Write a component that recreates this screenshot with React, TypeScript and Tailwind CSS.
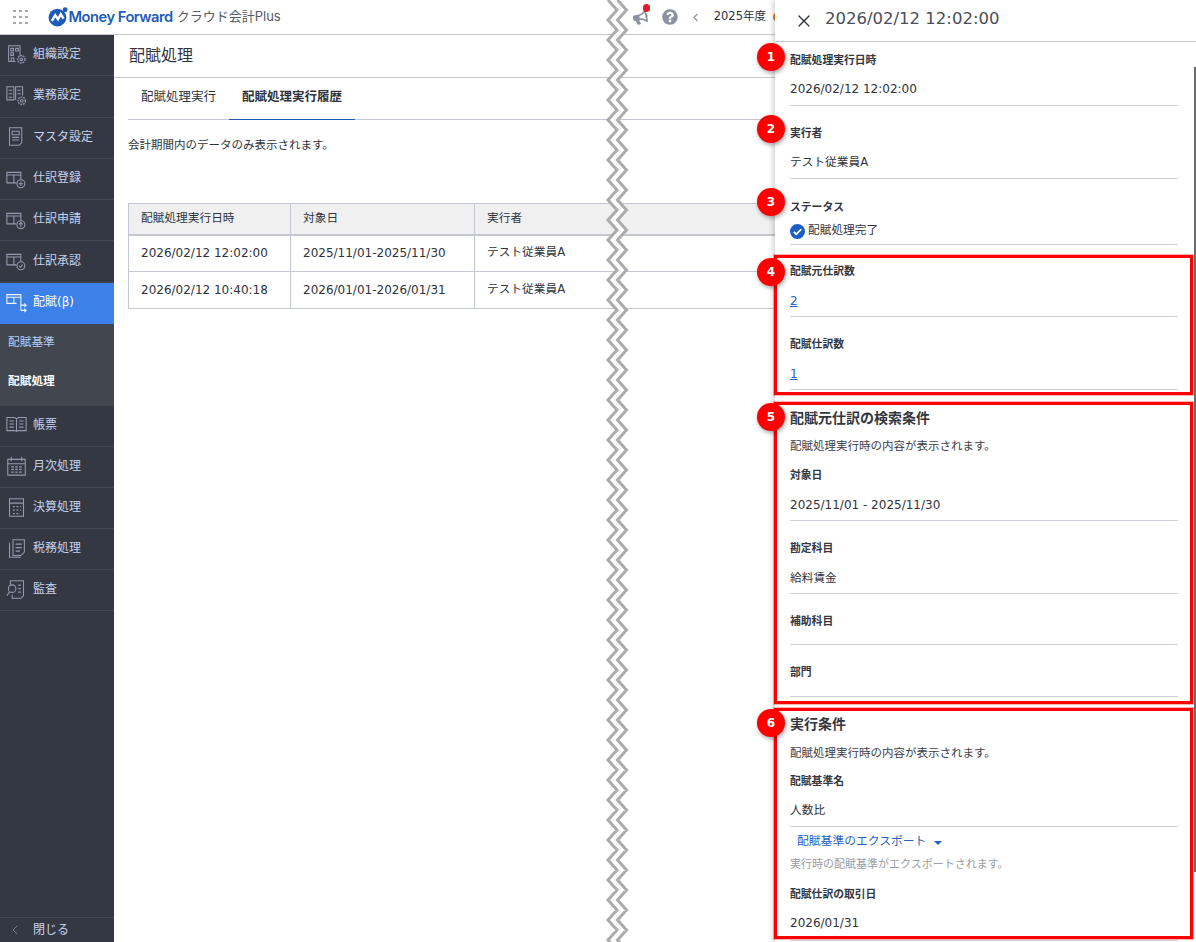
import { ReactNode } from 'react'
import { FaBullhorn, FaQuestionCircle } from 'react-icons/fa'
import { ChevronLeft, X } from 'lucide-react'

const font = { fontFamily: '"DejaVu Sans", "Noto Sans CJK JP", sans-serif' }
const logoFont = { fontFamily: 'Inter, "Noto Sans CJK JP", sans-serif' }

const Ico = ({ children }: { children: ReactNode }) => (
    <svg width="21" height="21" viewBox="0 0 24 24" fill="none" stroke="#949bb0" strokeWidth="1.2" className="shrink-0">
        {children}
    </svg>
)

const Gear = ({ x, y }: { x: number; y: number }) => (
    <g>
        <circle cx={x} cy={y} r="4.2" fill="#343842" strokeDasharray="2 1" strokeWidth="1.6" />
        <circle cx={x} cy={y} r="1.5" />
    </g>
)

const Ledger = ({ children }: { children?: ReactNode }) => (
    <>
        <path d="M17 13V5H1v12h11" />
        <path d="M1 8h16M9 8v9" />
        {children}
    </>
)

const icons: Record<string, ReactNode> = {
    org: (
        <>
            <path d="M3 20V2h13v12M3 20h8" />
            <path d="M5.5 5h3v3h-3zM11 5h3v3h-3zM5.5 10h3v3h-3zM6 20v-4h3v4" />
            <Gear x={17.5} y={17.5} />
        </>
    ),
    work: (
        <>
            <path d="M1 2h8v15H1zM11 17V2h8v10" />
            <path d="M3 6h4M3 10h4M3 14h4M13 6h4M13 10h4" />
            <Gear x={18} y={18} />
        </>
    ),
    master: (
        <>
            <path d="M4 2h14v17l-3 3H4z" />
            <path d="M7 6h8v4H7zM7 13h8M7 16h8" />
        </>
    ),
    entry: (
        <Ledger>
            <circle cx="17" cy="18" r="4.5" />
            <path d="M17 15.5v5M14.5 18h5" />
        </Ledger>
    ),
    request: (
        <Ledger>
            <circle cx="17" cy="18" r="4.5" />
            <path d="M17 21v-5.5M15 17.5l2-2 2 2" />
        </Ledger>
    ),
    approve: (
        <Ledger>
            <circle cx="17" cy="18" r="4.5" />
            <path d="M15 18l1.6 1.6 2.6-3" />
        </Ledger>
    ),
    allocate: (
        <>
            <path d="M17 10V3H1v10h11M1 6h16M9 6v7" />
            <path d="M17 10v11M17 15h6M17 21h6M21 13l2 2-2 2M21 19l2 2-2 2" />
        </>
    ),
    report: (
        <>
            <path d="M1 4h9l2 1.5L14 4h9v15H14l-2 1-2-1H1zM12 5.5V20" />
            <path d="M4 8h5M4 11.5h5M4 15h5M15 8h5M15 11.5h5M15 15h5" />
        </>
    ),
    month: (
        <>
            <path d="M2 5h20v18H2zM2 10h20M6 2v5M18 2v5" />
            <path d="M6 13.5h3M10.5 13.5h3M15 13.5h3M6 16.5h3M10.5 16.5h3M15 16.5h3M6 19.5h3M10.5 19.5h3M15 19.5h3" strokeWidth="1.5" />
        </>
    ),
    settle: (
        <>
            <path d="M4 2h16v20H4zM4 7h16" />
            <path d="M8 11h2M12 11h2M16 11h1M8 15h2M12 15h2M16 15h1M8 19h2M12 19h2" strokeWidth="1.5" />
        </>
    ),
    tax: (
        <>
            <path d="M8 2h13v14l-4 4H8z" />
            <path d="M4 5v17h13M11 7h7M11 11h7M11 15h5" />
        </>
    ),
    audit: (
        <>
            <path d="M5 7V2h15v17l-3 3H7v-4" />
            <path d="M14 7h3M14 11h3M14 15h3" />
            <circle cx="7" cy="11" r="4.3" />
            <path d="M4 15l-3 4" />
        </>
    ),
}

const menu = [
    { key: 'org', label: '組織設定' },
    { key: 'work', label: '業務設定' },
    { key: 'master', label: 'マスタ設定' },
    { key: 'entry', label: '仕訳登録' },
    { key: 'request', label: '仕訳申請' },
    { key: 'approve', label: '仕訳承認' },
]

const menu2 = [
    { key: 'report', label: '帳票' },
    { key: 'month', label: '月次処理' },
    { key: 'settle', label: '決算処理' },
    { key: 'tax', label: '税務処理' },
    { key: 'audit', label: '監査' },
]

const MenuItem = ({ k, label, h = 'h-[41.3px]' }: { k: string; label: string; h?: string }) => (
    <div className={`${h} flex items-center gap-[6px] pl-[6px] pb-[2px] border-b border-[#444852] text-[12px] text-[#c4d2ee]`}>
        <Ico>{icons[k]}</Ico>
        <span>{label}</span>
    </div>
)

function Sidebar() {
    return (
        <aside className="w-[114px] shrink-0 bg-[#343842] flex flex-col">
            {menu.map((m) => (
                <MenuItem key={m.key} k={m.key} label={m.label} />
            ))}
            <div className="h-[41px] bg-[#3c80ea] flex items-center gap-[6px] pl-[6px] pb-[2px] text-[12px] text-white">
                <svg width="21" height="21" viewBox="0 0 24 24" fill="none" stroke="#eef3ff" strokeWidth="1.2" className="shrink-0">
                    {icons.allocate}
                </svg>
                <span>配賦(β)</span>
            </div>
            <div className="bg-[#42464f] text-[11.7px]">
                <div className="h-[38px] pl-2 flex items-center text-[#b6cdf5]">配賦基準</div>
                <div className="h-[44px] pl-2 pb-[4px] flex items-center text-white font-bold">配賦処理</div>
            </div>
            {menu2.map((m) => (
                <MenuItem key={m.key} k={m.key} label={m.label} h="h-[41.1px]" />
            ))}
            <div className="mt-auto h-[25px] border-t border-[#444852] flex items-center pl-[7px] gap-[10px] text-[12px] text-[#c4d2ee]">
                <ChevronLeft size={16} strokeWidth={1.2} color="#8d93a5" />
                <span>閉じる</span>
            </div>
        </aside>
    )
}

function Header() {
    return (
        <header className="h-[35px] shrink-0 border-b border-[#c4c8d0] flex items-center bg-white">
            <div className="grid grid-cols-3 gap-[3.5px] ml-[13px] shrink-0">
                {Array.from({ length: 9 }).map((_, i) => (
                    <span key={i} className="w-[2.5px] h-[2.5px] bg-[#a5a9b4]" />
                ))}
            </div>
            <svg width="20" height="20" viewBox="0 0 18 18" className="ml-[20px] shrink-0">
                <circle cx="8.5" cy="9.5" r="8" fill="#1c5cb8" />
                <path d="M3.5 12.5l3-5 2.5 3.5 2.5-4.5 2.5 4" fill="none" stroke="#fff" strokeWidth="2.2" />
                <circle cx="15.5" cy="2.5" r="2.2" fill="#1c5cb8" />
            </svg>
            <span style={logoFont} className="ml-[1px] text-[14.7px] font-semibold text-[#1c5cb8] tracking-[-0.5px] whitespace-nowrap">Money Forward</span>
            <span style={logoFont} className="ml-[4px] text-[13px] text-[#555a64] whitespace-nowrap">クラウド会計Plus</span>
            <div className="ml-auto -mr-[8px] flex items-center shrink-0">
                <div className="relative text-[#8d92a2]">
                    <FaBullhorn size={15} className="-rotate-12" />
                    <span className="absolute -top-[6px] left-[10px] w-[7px] h-[8px] rounded-full bg-[#e0192c]" />
                </div>
                <FaQuestionCircle size={16} color="#8d92a2" className="ml-[14px] shrink-0" />
                <ChevronLeft size={13} color="#8d92a2" className="ml-[11px] shrink-0" />
                <span className="ml-[12px] text-[11.5px] text-[#2b2f38] whitespace-nowrap">2025年度</span>
                <span className="ml-[7px] w-[10px] h-[10px] rounded-full bg-[#e8731a] shrink-0" />
            </div>
        </header>
    )
}

const rows = [
    ['2026/02/12 12:02:00', '2025/11/01-2025/11/30', 'テスト従業員A'],
    ['2026/02/12 10:40:18', '2026/01/01-2026/01/31', 'テスト従業員A'],
]

function Main() {
    return (
        <main className="flex-1 min-w-0 bg-white text-[#2f333b] overflow-hidden">
            <div className="h-[43px] border-b border-[#c4c8d0] pl-[15px] flex items-center text-[16px]">配賦処理</div>
            <div className="ml-[14px] h-[42px] border-b border-[#c4c8d0] flex text-[12.5px]">
                <div className="w-[101px] pl-[13px] flex items-center pb-[2px]">配賦処理実行</div>
                <div className="w-[126px] pl-[13px] flex items-center pb-[2px] font-bold border-b border-[#2359b5] -mb-px">配賦処理実行履歴</div>
            </div>
            <p className="ml-[14px] mt-[15px] text-[11.5px] leading-[20px]">会計期間内のデータのみ表示されます。</p>
            <table className="mt-[48px] ml-[14px] w-[700px] border-collapse table-fixed text-[12px]">
                <thead>
                    <tr className="h-[31px] bg-[#f0f0f0] border-b-2 border-[#c4c8d0] text-[11.7px]">
                        <th className="w-[162px] border border-[#c4c8d0] pl-3 text-left font-normal">配賦処理実行日時</th>
                        <th className="w-[184px] border border-[#c4c8d0] pl-3 text-left font-normal">対象日</th>
                        <th className="border border-[#c4c8d0] pl-3 text-left font-normal">実行者</th>
                    </tr>
                </thead>
                <tbody>
                    {rows.map((r) => (
                        <tr key={r[0]} className="h-[37px]">
                            <td className="border border-[#c4c8d0] pl-3">{r[0]}</td>
                            <td className="border border-[#c4c8d0] pl-3">{r[1]}</td>
                            <td className="border border-[#c4c8d0] pl-3 text-[11.7px]">{r[2]}</td>
                        </tr>
                    ))}
                </tbody>
            </table>
        </main>
    )
}

interface FieldProps {
    label: string
    children?: ReactNode
    h?: string
    valueH?: string
    pad?: string
}

const Field = ({ label, children, h = 'h-[73px]', valueH = 'h-[34px]', pad = 'pt-[2px]' }: FieldProps) => (
    <div className={`${h} flex flex-col justify-end border-b border-[#cdd0d8]`}>
        <div className="text-[10.8px] font-bold leading-[16px] text-[#33373f] mb-[2px]">{label}</div>
        <div className={`${valueH} ${pad} flex items-center text-[12px] text-[#2f333b]`}>{children}</div>
    </div>
)

const Heading = ({ children }: { children: ReactNode }) => (
    <h2 className="text-[14px] font-bold leading-[20px] text-[#33373f]">{children}</h2>
)

const Desc = ({ mt }: { mt: string }) => (
    <p className={`text-[11.5px] leading-[18px] ${mt} text-[#3c4048]`}>配賦処理実行時の内容が表示されます。</p>
)

const Badge = ({ n, top }: { n: number; top: string }) => (
    <div className={`absolute ${top} -left-[18px] w-[28px] h-[28px] rounded-full bg-[#ff0000] text-white text-[12px] font-bold flex items-center justify-center shadow-[1px_2px_4px_rgba(0,0,0,0.35)]`}>
        {n}
    </div>
)

const Frame = ({ className }: { className: string }) => (
    <div className={`absolute left-[-1px] w-[419px] border-[3.5px] border-[#ff0000] shadow-[0_0_0_1px_rgba(255,0,0,0.3)] ${className}`} />
)

function Drawer() {
    return (
        <section className="w-[421px] shrink-0 bg-white flex flex-col shadow-[-2px_0_5px_rgba(0,0,0,0.18)] z-10 relative">
            <div className="h-[42px] shrink-0 border-b border-[#c4c8d0] flex items-center pl-[19px] gap-[11px] text-[#4a4e57]">
                <X size={20} strokeWidth={1.6} color="#33373f" />
                <span className="text-[16.5px] pb-[2px]">2026/02/12 12:02:00</span>
            </div>
            <div className="pl-[15px] pr-[18px]">
                <Field label="配賦処理実行日時" h="h-[64px]">2026/02/12 12:02:00</Field>
                <Field label="実行者" pad="pt-[4px]"><span className="text-[11.7px]">テスト従業員A</span></Field>
                <Field label="ステータス" h="h-[66px]" valueH="h-[26px]" pad="pt-0">
                    <svg width="15" height="15" viewBox="0 0 16 16" className="mr-[3px] shrink-0">
                        <circle cx="8" cy="8" r="8" fill="#1c5fc4" />
                        <path d="M4 8.3l2.7 2.6L12 5.6" fill="none" stroke="#fff" strokeWidth="1.8" />
                    </svg>
                    <span className="text-[11.7px]">配賦処理完了</span>
                </Field>
                <Field label="配賦元仕訳数" h="h-[72px]" pad="pt-[4px]">
                    <a className="underline text-[#2561c4]">2</a>
                </Field>
                <Field label="配賦仕訳数" pad="pt-[4px]">
                    <a className="underline text-[#2561c4]">1</a>
                </Field>
                <div className="mt-[18px]">
                    <Heading>配賦元仕訳の検索条件</Heading>
                    <Desc mt="mt-[9px]" />
                </div>
                <Field label="対象日" h="h-[66px]" pad="pt-[4px]">2025/11/01 - 2025/11/30</Field>
                <Field label="勘定科目" pad="pt-[6px]"><span className="text-[11.7px]">給料賃金</span></Field>
                <Field label="補助科目" h="h-[51px]" valueH="h-[12px]" />
                <Field label="部門" h="h-[52px]" valueH="h-[13px]" />
                <div className="mt-[17px]">
                    <Heading>実行条件</Heading>
                    <Desc mt="mt-[10px]" />
                </div>
                <Field label="配賦基準名" h="h-[65px]" pad="pt-[4px]"><span className="text-[11.7px]">人数比</span></Field>
                <div className="h-[30px] pl-[7px] flex items-center gap-[8px] text-[11.8px] text-[#2561c4]">
                    配賦基準のエクスポート
                    <span className="w-0 h-0 mt-[2px] border-x-[4px] border-x-transparent border-t-[4px] border-t-[#2561c4]" />
                </div>
                <p className="text-[11px] leading-[16px] text-[#9a9da5]">実行時の配賦基準がエクスポートされます。</p>
                <div className="h-[3px]" />
                <Field label="配賦仕訳の取引日" h="h-[65px]" valueH="h-[35px]" pad="pt-0">2026/01/31</Field>
            </div>
            <div className="absolute right-0 top-[67px] h-[805px] w-[2px] bg-[#6a6a6a]" />
            <Frame className="top-[255px] h-[140px]" />
            <Frame className="top-[402px] h-[302px]" />
            <Frame className="top-[708px] h-[231px]" />
            <Badge n={1} top="top-[43px]" />
            <Badge n={2} top="top-[115px]" />
            <Badge n={3} top="top-[188px]" />
            <Badge n={4} top="top-[258px]" />
            <Badge n={5} top="top-[403px]" />
            <Badge n={6} top="top-[709px]" />
        </section>
    )
}

// 省略の波線
function Zigzag() {
    const left: string[] = []
    const right: string[] = []
    for (let i = 0; i <= 96; i++) {
        const y = i * 10
        const odd = i % 2 === 1
        left.push(`${odd ? 12 : 3},${y}`)
        right.push(`${odd ? 21.5 : 12.5},${y}`)
    }
    const fill = [...left, ...[...right].reverse()].join(' ')
    return (
        <svg width="24" height="942" className="absolute left-[605px] top-0 z-[5]">
            <polygon points={fill} fill="#fff" />
            <polyline points={left.join(' ')} fill="none" stroke="#acacac" strokeWidth="3" />
            <polyline points={right.join(' ')} fill="none" stroke="#acacac" strokeWidth="3" />
        </svg>
    )
}

export default function App() {
    return (
        <div className="relative w-[1196px] h-[942px] overflow-hidden flex bg-white" style={font}>
            <div className="flex-1 min-w-0 flex flex-col">
                <Header />
                <div className="flex-1 flex min-h-0">
                    <Sidebar />
                    <Main />
                </div>
            </div>
            <Drawer />
            <Zigzag />
        </div>
    )
}
